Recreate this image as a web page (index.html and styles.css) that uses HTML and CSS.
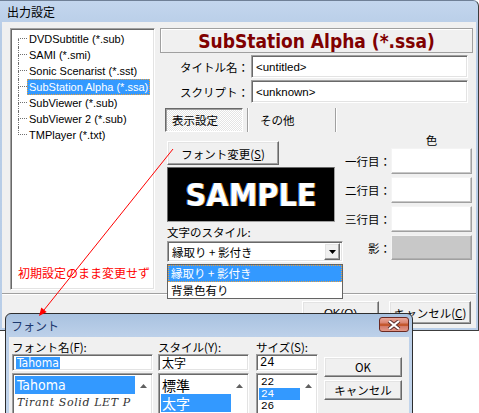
FILE: index.html
```html
<!DOCTYPE html>
<html lang="ja">
<head>
<meta charset="utf-8">
<title>出力設定</title>
<link rel="stylesheet" href="styles.css">
</head>
<body>
<div class="win mainwin">
  <div class="titlebar"><span class="title">出力設定</span></div>
  <div class="client">
    <div class="cols">
      <div class="tree sunken">
        <div class="node first"><span class="conn"><i class="up"></i><i class="down"></i></span><span class="lbl">DVDSubtitle (*.sub)</span></div>
        <div class="node"><span class="conn"><i class="up"></i><i class="down"></i></span><span class="lbl">SAMI (*.smi)</span></div>
        <div class="node"><span class="conn"><i class="up"></i><i class="down"></i></span><span class="lbl">Sonic Scenarist (*.sst)</span></div>
        <div class="node sel"><span class="conn"><i class="up"></i><i class="down"></i></span><span class="lbl">SubStation Alpha (*.ssa)</span></div>
        <div class="node"><span class="conn"><i class="up"></i><i class="down"></i></span><span class="lbl">SubViewer (*.sub)</span></div>
        <div class="node"><span class="conn"><i class="up"></i><i class="down"></i></span><span class="lbl">SubViewer 2 (*.sub)</span></div>
        <div class="node last"><span class="conn"><i class="up"></i><i class="down"></i></span><span class="lbl">TMPlayer (*.txt)</span></div>
      </div>
      <div class="panel">
        <div class="fmtname">SubStation Alpha (*.ssa)</div>
        <div class="field"><span class="flabel">タイトル名：</span><span class="edit sunken">&lt;untitled&gt;</span></div>
        <div class="field"><span class="flabel">スクリプト：</span><span class="edit sunken">&lt;unknown&gt;</span></div>
        <div class="tabs">
          <span class="tab on">表示設定</span>
          <span class="vsep"></span>
          <span class="tab">その他</span>
          <span class="vsep"></span>
        </div>
        <div class="disp">
          <div class="fontcol">
            <div class="btn fontbtn">フォント変更(<u>S</u>)</div>
            <div class="sample">SAMPLE</div>
            <div class="stylelbl">文字のスタイル:</div>
            <div class="combo sunken">
              <span class="ctext">縁取り&nbsp;+&nbsp;影付き</span>
              <span class="cbtn btn"><svg width="7" height="4" viewBox="0 0 7 4"><path d="M0 0H7L3.5 4Z" fill="#000"/></svg></span>
            </div>
          </div>
          <div class="colors">
            <div class="chead">色</div>
            <span class="clabel">一行目：</span><span class="swatch"></span>
            <span class="clabel">二行目：</span><span class="swatch"></span>
            <span class="clabel">三行目：</span><span class="swatch"></span>
            <span class="clabel">影：</span><span class="swatch shadow"></span>
          </div>
        </div>
      </div>
    </div>
    <div class="hsep"></div>
    <div class="btnrow">
      <div class="btn okb">OK(<u>O</u>)</div>
      <div class="btn cancelb">キャンセル(<u>C</u>)</div>
    </div>
  </div>
</div>

<div class="droplist">
  <div class="ditem sel">縁取り&nbsp;+&nbsp;影付き</div>
  <div class="ditem">背景色有り</div>
</div>

<div class="note">初期設定のまま変更せず</div>

<div class="win fontdlg">
  <div class="titlebar dlgbar">
    <span class="title dlgtitle">フォント</span>
    <span class="closebtn"><svg width="14" height="10" viewBox="0 0 14 10"><path d="M2 1L12 9M12 1L2 9" stroke="#5a3030" stroke-width="4"/><path d="M2 1L12 9M12 1L2 9" stroke="#fff" stroke-width="2.2"/></svg></span>
  </div>
  <div class="dclient">
    <div class="dcol c1">
      <div class="dlabel">フォント名(F):</div>
      <div class="dedit sunken"><span class="hl">Tahoma</span></div>
      <div class="dlist sunken">
        <div class="ditems">
          <div class="fitem sel">Tahoma</div>
          <div class="fitem script">Tirant Solid LET P</div>
        </div>
        <div class="vscroll"><svg width="7" height="4" viewBox="0 0 7 4"><path d="M0 4H7L3.5 0Z" fill="#606060"/></svg></div>
      </div>
    </div>
    <div class="dcol c2">
      <div class="dlabel">スタイル(Y):</div>
      <div class="dedit sunken">太字</div>
      <div class="dlist sunken">
        <div class="ditems">
          <div class="sitem">標準</div>
          <div class="sitem sel">太字</div>
        </div>
        <div class="vscroll"><svg width="7" height="4" viewBox="0 0 7 4"><path d="M0 4H7L3.5 0Z" fill="#606060"/></svg></div>
      </div>
    </div>
    <div class="dcol c3">
      <div class="dlabel">サイズ(S):</div>
      <div class="dedit sunken mono">24</div>
      <div class="dlist sunken">
        <div class="ditems">
          <div class="zitem">22</div>
          <div class="zitem sel">24</div>
          <div class="zitem">26</div>
        </div>
        <div class="vscroll"><svg width="7" height="4" viewBox="0 0 7 4"><path d="M0 4H7L3.5 0Z" fill="#606060"/></svg></div>
      </div>
    </div>
    <div class="dcol c4">
      <div class="btn dbtn">OK</div>
      <div class="btn dbtn">キャンセル</div>
    </div>
  </div>
</div>

<svg class="arrow" width="479" height="413" viewBox="0 0 479 413">
  <line x1="173" y1="149" x2="44" y2="310" stroke="#f00" stroke-width="1"/>
  <polygon points="39,316 46.7,312 41.3,307.6" fill="#f00"/>
</svg>
</body>
</html>
```

FILE: styles.css
```css
* { box-sizing: border-box; }
html, body { margin: 0; padding: 0; }
body {
  width: 479px;
  height: 413px;
  overflow: hidden;
  position: relative;
  background: #fff;
  font-family: "Liberation Sans", "Noto Sans CJK JP", sans-serif;
  font-size: 11.5px;
  color: #000;
}
u { text-decoration: underline; text-underline-offset: 1px; }

/* 3D edges */
.sunken {
  border: 1px solid;
  border-color: #a0a0a0 #fff #fff #a0a0a0;
  box-shadow: inset 1px 1px #696969, inset -1px -1px #e3e3e3;
  background: #fff;
}
.btn {
  border: 1px solid;
  border-color: #fff #696969 #696969 #fff;
  box-shadow: inset -1px -1px #a0a0a0, inset 1px 1px #e3e3e3;
  background: #f0f0f0;
  display: flex;
  align-items: center;
  justify-content: center;
}

/* windows */
.win {
  position: absolute;
  background: linear-gradient(#c3d6ee, #b7cce6 30px, #b9cee8);
  display: flex;
  flex-direction: column;
}
.mainwin {
  left: 0;
  top: 0;
  width: 479px;
  height: 331px;
  border-top: 1px solid #6f8097;
  border-right: 1px solid #3c3c3c;
  border-bottom: 1px solid #3c3c3c;
  border-top-right-radius: 6px;
  padding: 0 2px 2px 2px;
}
.titlebar {
  height: 21px;
  display: flex;
  align-items: center;
  flex: none;
}
.title {
  padding-left: 5px;
  font-size: 12px;
  color: #000;
  font-family: "Noto Sans CJK JP", sans-serif;
}
.client {
  flex: 1;
  background: #f0f0f0;
  padding: 6px 1px 0 8px;
  display: flex;
  flex-direction: column;
}
.cols { display: flex; }

/* tree */
.tree {
  width: 145px;
  height: 262px;
  padding: 2px 0 0 2px;
}
.node {
  height: 16px;
  display: flex;
  align-items: center;
  font-size: 11px;
}
.conn {
  width: 9px;
  height: 16px;
  margin-left: 5px;
  display: flex;
  flex-direction: column;
}
.conn i { display: block; height: 8px; border-left: 1px dotted #707070; }
.conn .up { border-bottom: 1px dotted #707070; }
.node.first .up { border-left-color: transparent; }
.node.last .down { border-left-color: transparent; }
.lbl {
  padding: 0 2px;
  height: 16px;
  line-height: 16px;
  white-space: nowrap;
}
.node.sel .lbl {
  background: #3399ff;
  color: #fff;
  outline: 1px dotted #e8a040;
  outline-offset: -1px;
}

/* right panel */
.panel {
  width: 313px;
  margin-left: 5px;
  display: flex;
  flex-direction: column;
}
.fmtname {
  height: 25px;
  border: 1px solid #a0a0a0;
  box-shadow: inset 1px 1px #fff;
  display: flex;
  align-items: center;
  justify-content: center;
  font-family: "DejaVu Sans Condensed", "DejaVu Sans", sans-serif;
  font-stretch: condensed;
  font-weight: bold;
  font-size: 19px;
  color: #800000;
  padding-top: 1px;
}
.field {
  display: flex;
  align-items: center;
  margin-top: 2px;
  height: 23px;
}
.flabel {
  width: 91px;
  text-align: right;
  padding-right: 2px;
  font-family: "Noto Sans CJK JP", sans-serif;
  font-size: 11.5px;
}
.edit {
  width: 217px;
  height: 23px;
  display: flex;
  align-items: center;
  padding-left: 4px;
  font-size: 11.5px;
}
.tabs {
  display: flex;
  align-items: stretch;
  height: 24px;
  margin-top: 5px;
  padding-left: 5px;
}
.tab {
  display: flex;
  align-items: center;
  font-family: "Noto Sans CJK JP", sans-serif;
}
.tab.on {
  width: 78px;
  padding-left: 6px;
  border: 1px solid;
  border-color: #696969 #fff #fff #696969;
  box-shadow: inset 1px 1px #a0a0a0;
  background: repeating-conic-gradient(#ffffff 0 25%, #e4e4e4 0 50%) 0 0 / 2px 2px;
  margin-right: 4px;
}
.tab:not(.on) { width: 86px; padding-left: 11px; }
.vsep {
  width: 2px;
  border-left: 1px solid #a0a0a0;
  border-right: 1px solid #fff;
}

.disp { display: flex; }
.fontcol {
  width: 176px;
  margin-left: 7px;
  display: flex;
  flex-direction: column;
}
.fontbtn {
  width: 112px;
  height: 24px;
  margin-top: 9px;
  font-family: "Noto Sans CJK JP", sans-serif;
  padding-top: 1px;
}
.sample {
  width: 168px;
  height: 55px;
  margin-top: 2px;
  background: #000;
  border: 1px solid;
  border-color: #696969 #a0a0a0 #a0a0a0 #696969;
  color: #fff;
  display: flex;
  align-items: center;
  justify-content: center;
  font-family: "DejaVu Sans Condensed", "DejaVu Sans", sans-serif;
  font-stretch: condensed;
  font-weight: bold;
  font-size: 32px;
  text-shadow: -1px 0 #3a7bd5, 1px 0 #c08020;
}
.stylelbl {
  height: 14px;
  line-height: 14px;
  margin-top: 3px;
  font-family: "Noto Sans CJK JP", sans-serif;
}
.combo {
  height: 21px;
  margin-top: 2px;
  display: flex;
  align-items: center;
  padding-left: 4px;
  padding-right: 2px;
}
.ctext { flex: 1; font-family: "Noto Sans CJK JP", sans-serif; }
.cbtn { width: 16px; height: 17px; }

.colors {
  width: 130px;
  display: grid;
  grid-template-columns: 1fr 81px;
  grid-template-rows: 13px 26px 26px 26px 25px;
  row-gap: 3px;
  padding-right: 1px;
  align-items: center;
}
.chead {
  grid-column: 2;
  text-align: center;
  line-height: 13px;
  align-self: start;
  margin-top: 2px;
  margin-bottom: -5px;
  font-family: "Noto Sans CJK JP", sans-serif;
}
.clabel {
  text-align: right;
  font-family: "Noto Sans CJK JP", sans-serif;
}
.swatch {
  height: 100%;
  background: #fff;
  border: 1px solid;
  border-color: #f4f4f4 #a0a0a0 #a0a0a0 #f4f4f4;
  box-shadow: inset -1px -1px #c8c8c8;
}
.swatch.shadow { background: #c8c8c8; box-shadow: inset -1px -1px #b0b0b0; }

.hsep {
  margin-top: 3px;
  margin-left: -8px;
  margin-right: -1px;
  height: 2px;
  border-top: 1px solid #a0a0a0;
  border-bottom: 1px solid #fff;
}
.btnrow {
  display: flex;
  justify-content: flex-end;
  gap: 10px;
  margin-top: 6px;
  padding-right: 4px;
}
.okb { width: 77px; height: 23px; }
.cancelb { width: 82px; height: 23px; font-family: "Noto Sans CJK JP", sans-serif; }

/* dropped list */
.droplist {
  position: absolute;
  left: 167px;
  top: 264px;
  width: 176px;
  height: 35px;
  background: #fff;
  border: 1px solid #646464;
  font-family: "Noto Sans CJK JP", sans-serif;
}
.ditem { height: 16px; line-height: 16px; padding-left: 3px; }
.ditem.sel {
  height: 17px;
  line-height: 17px;
  background: #3399ff;
  color: #fff;
  outline: 1px dotted #e8a040;
  outline-offset: -1px;
}

/* annotation */
.note {
  position: absolute;
  left: 18px;
  top: 265px;
  line-height: 16px;
  font-size: 12px;
  color: #f00;
  font-family: "Noto Sans CJK JP", sans-serif;
}
.arrow {
  position: absolute;
  left: 0;
  top: 0;
  pointer-events: none;
}

/* font dialog */
.fontdlg {
  left: 5px;
  top: 313px;
  width: 408px;
  height: 130px;
  border: 1px solid #2e2e2e;
  border-radius: 6px 6px 0 0;
  padding: 0 3px;
  background: linear-gradient(#a9c2e0, #bcd0e9 22px, #c4d6ec);
}
.dlgbar { height: 23px; }
.dlgtitle { padding-left: 2px; color: #1e3a6e; font-size: 12px; }
.closebtn {
  margin-left: auto;
  width: 30px;
  height: 15px;
  margin-top: -2px;
  border: 1px solid #6b2a22;
  border-radius: 3px;
  background: linear-gradient(#eaa99c, #d9826f 40%, #c4582e 45%, #c4582e 58%, #d27a6a 62%, #e39888);
  display: flex;
  align-items: center;
  justify-content: center;
}
.dclient {
  flex: 1;
  background: #f0f0f0;
  display: flex;
  padding: 3px 0 0 3px;
}
.dcol { display: flex; flex-direction: column; }
.c1 { width: 141px; }
.c2 { width: 91px; margin-left: 5px; }
.c3 { width: 62px; margin-left: 7px; }
.c4 { width: 78px; margin-left: 6px; padding-top: 17px; gap: 3px; }
.dlabel {
  height: 14px;
  line-height: 14px;
  font-family: "Noto Sans CJK JP", sans-serif;
  white-space: nowrap;
}
.dedit {
  height: 17px;
  display: flex;
  align-items: center;
  padding-left: 3px;
  font-size: 12px;
}
.hl { background: #3399ff; color: #fff; padding: 0 1px; line-height: 12px; font-family: "DejaVu Sans Condensed", "DejaVu Sans", sans-serif; font-size: 12px; }
.dlist {
  margin-top: 2px;
  height: 60px;
  display: flex;
  padding: 2px 1px 0 2px;
}
.ditems { flex: 1; overflow: hidden; }
.vscroll {
  width: 16px;
  display: flex;
  justify-content: center;
  padding-top: 8px;
}
.fitem { height: 18px; line-height: 18px; padding-left: 2px; font-size: 14px; font-family: "DejaVu Sans Condensed", "DejaVu Sans", sans-serif; white-space: nowrap; }
.fitem.sel { background: #3399ff; color: #fff; }
.fitem.script { font-family: "DejaVu Serif", serif; font-style: italic; font-size: 11px; letter-spacing: 0.6px; color: #333; }
.sitem { height: 18px; line-height: 18px; font-size: 14px; font-family: "Noto Sans CJK JP", sans-serif; padding-left: 1px; }
.sitem.sel { background: #3399ff; color: #fff; }
.mono, .zitem { font-family: "Liberation Mono", monospace; }
.zitem { height: 12px; line-height: 12px; font-size: 11px; padding-left: 2px; }
.zitem.sel { background: #3399ff; color: #fff; }
.dbtn { height: 20px; font-family: "Noto Sans CJK JP", sans-serif; }
```
